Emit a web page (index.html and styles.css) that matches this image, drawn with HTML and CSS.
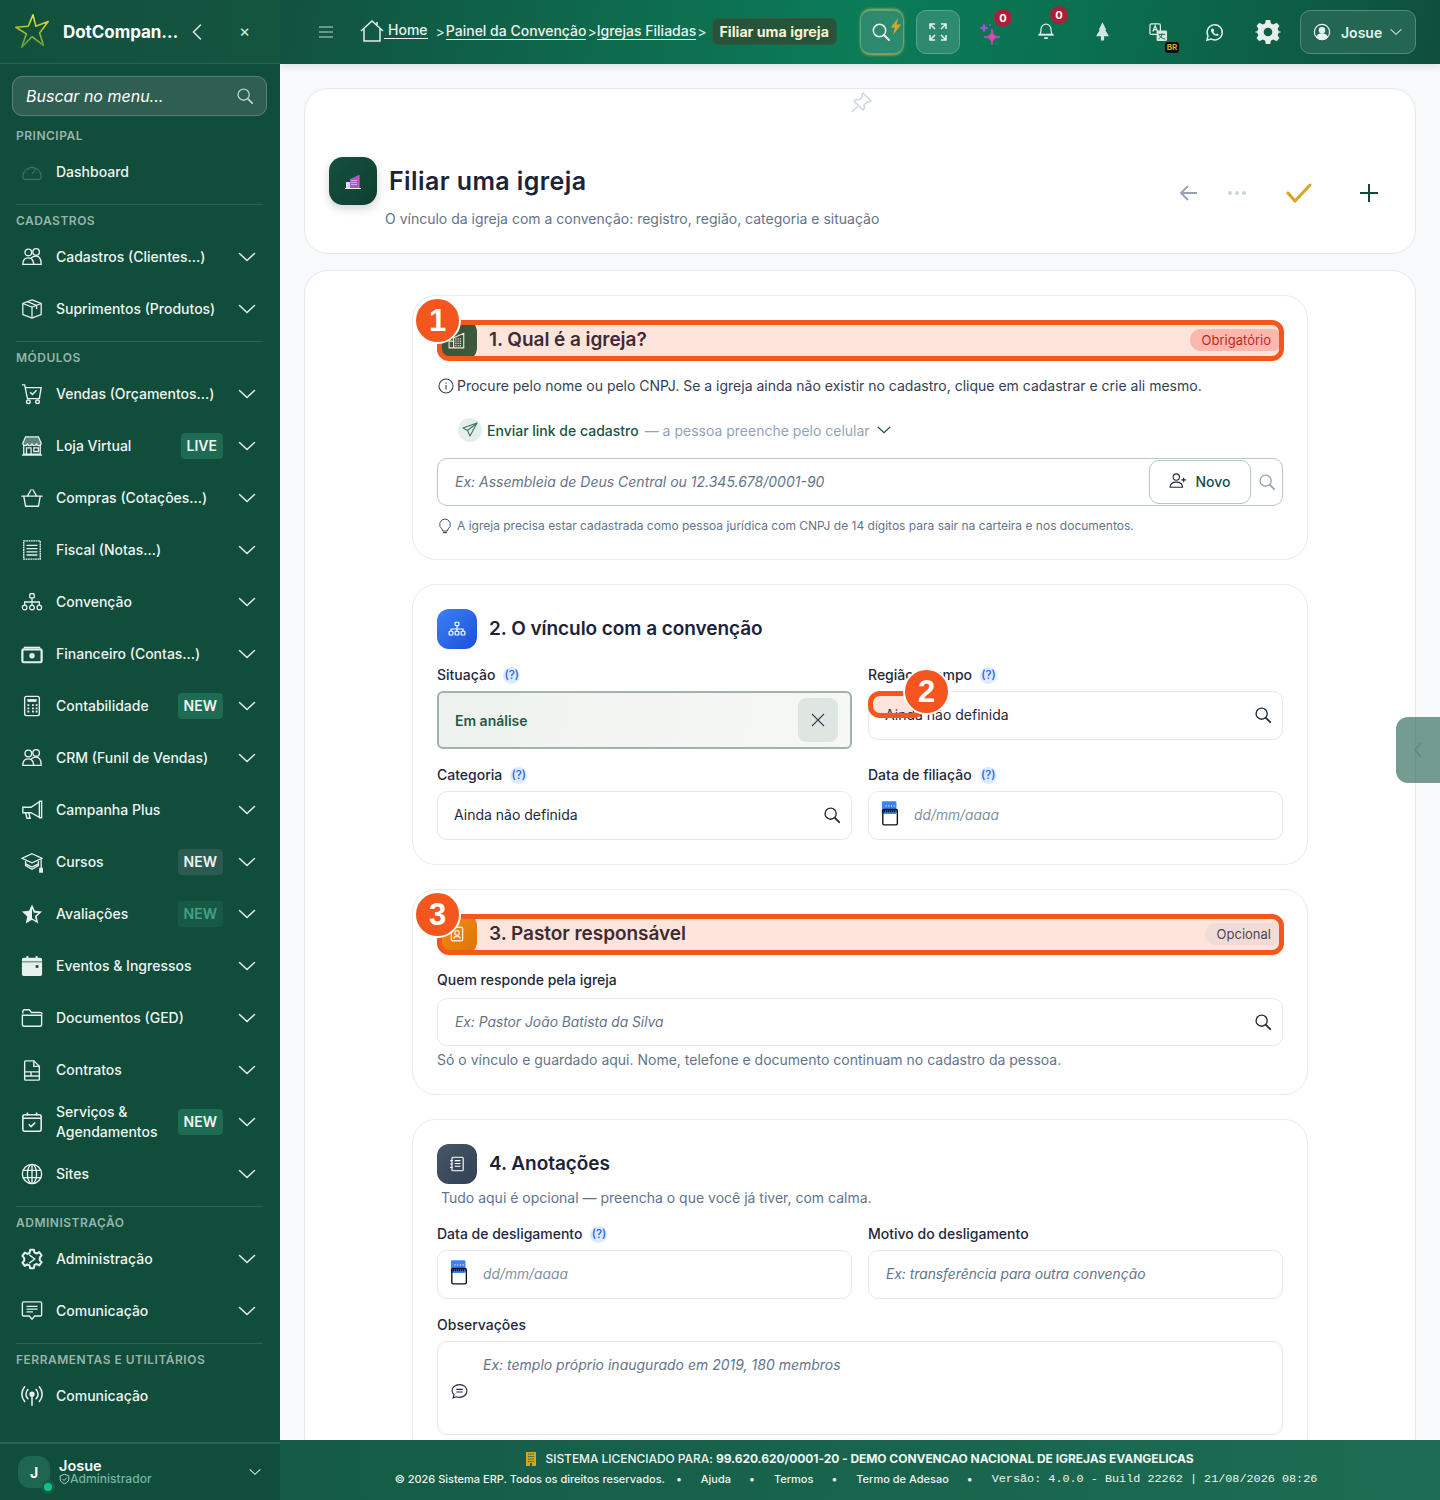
FILE: index.html
```html
<!DOCTYPE html>
<html lang="pt-BR">
<head>
<meta charset="utf-8">
<title>Filiar uma igreja</title>
<link rel="stylesheet" href="styles.css">
</head>
<body>
<svg class="defs" width="0" height="0" aria-hidden="true">
  <symbol id="chev" viewBox="0 0 18 18"><path d="M1.5 5.5 9 12.5l7.5-7" fill="none" stroke="currentColor" stroke-width="1.6" stroke-linecap="round"/></symbol>
  <symbol id="search" viewBox="0 0 20 20"><circle cx="8.5" cy="8.5" r="6.2" fill="none" stroke="currentColor" stroke-width="1.5"/><path d="m13.2 13.2 4.8 4.8" stroke="currentColor" stroke-width="2" stroke-linecap="round"/></symbol>
  <symbol id="people" viewBox="0 0 24 24"><g fill="none" stroke="currentColor" stroke-width="1.5"><circle cx="8" cy="7" r="3.6"/><circle cx="16.5" cy="6.5" r="3.6"/><path d="M2 20c0-4 2-7 6-7 2 0 4 1 5 3l1 4z"/><path d="M11 13c1.5-1.5 3.5-2 5.500-2 3.500 0 5.500 3.500 5.500 9h-8"/></g></symbol>
  <symbol id="cal" viewBox="0 0 22 30"><rect x="1" y="1" width="16" height="14" rx="1.5" fill="#3b82f6"/><path d="M5 6h1m2 0h1m2 0h1m2 0H15" stroke="#fff" stroke-width="1.5"/><path d="M1 12h16" stroke="#111" stroke-width="2" stroke-dasharray="1.5 .7"/><rect x="2" y="10" width="16" height="17" rx="1.5" fill="none" stroke="#111" stroke-width="1.5"/></symbol>
</svg>

<div class="app">
  <aside class="sidebar">
    <div class="brand">
      <svg class="logo" viewBox="0 0 40 40"><defs><linearGradient id="lg" x1="0" y1="0" x2="0" y2="1"><stop offset="0" stop-color="#e8e22a"/><stop offset="1" stop-color="#5e9b3a"/></linearGradient></defs><path d="M20 2 23 14 36 9 27 21 31 34 19 25 8 36 13 22 2 15 15 14Z" fill="#11503d" stroke="url(#lg)" stroke-width="1.7" stroke-linejoin="round"/></svg>
      <span class="brand-name">DotCompan…</span>
      <svg class="brand-back" viewBox="0 0 12 18"><path d="M9.5 2 2.5 9l7 7" fill="none" stroke="currentColor" stroke-width="1.5" stroke-linecap="round"/></svg>
      <span class="brand-close">×</span>
    </div>
    <div class="side-search"><span>Buscar no menu...</span><svg class="ic18"><use href="#search"/></svg></div>

    <nav class="side-nav">
      <div class="group">
        <div class="group-label">PRINCIPAL</div>
        <a class="item"><svg class="ic dim" viewBox="0 0 24 24" fill="none" stroke="currentColor" stroke-width="1.3"><path d="M2 17a10 10 0 0 1 20 0c0 2-1 3-2 3H4c-1 0-2-1-2-3Z"/><path d="m12 14 4-5M6 13h1m10 0h1M8 9l.7.7M12 7v1"/></svg><span class="lbl">Dashboard</span></a>
      </div>
      <div class="group">
        <div class="group-label">CADASTROS</div>
        <a class="item"><svg class="ic"><use href="#people"/></svg><span class="lbl">Cadastros (Clientes...)</span><svg class="chev"><use href="#chev"/></svg></a>
        <a class="item"><svg class="ic" viewBox="0 0 24 24" fill="none" stroke="currentColor" stroke-width="1.4"><path d="M12 2 22 6v12l-10 4-10-4V6Z"/><path d="m2 6 10 4 10-4M12 10v12M7 4l10 4v4"/></svg><span class="lbl">Suprimentos (Produtos)</span><svg class="chev"><use href="#chev"/></svg></a>
      </div>
      <div class="group">
        <div class="group-label">MÓDULOS</div>
        <a class="item"><svg class="ic" viewBox="0 0 24 24" fill="none" stroke="currentColor" stroke-width="1.5"><path d="M1 2h3l3 15h13l2-12H5"/><path d="m10 10 2.5 2.5L17 8"/><circle cx="8" cy="20.5" r="2"/><circle cx="18" cy="20.5" r="2"/></svg><span class="lbl">Vendas (Orçamentos...)</span><svg class="chev"><use href="#chev"/></svg></a>
        <a class="item"><svg class="ic" viewBox="0 0 24 24" fill="none" stroke="currentColor" stroke-width="1.4"><path d="M5 2h14l3 7a2.500 2.500 0 0 1-5 0 2.500 2.500 0 0 1-5 0 2.500 2.500 0 0 1-5 0 2.500 2.500 0 0 1-5 0Z" fill="currentColor" fill-opacity=".35"/><path d="M3 11v10h18V11M1 22h22M6 21v-7h5v7M14 14h5v4h-5z"/></svg><span class="lbl">Loja Virtual</span><span class="tag live">LIVE</span><svg class="chev"><use href="#chev"/></svg></a>
        <a class="item"><svg class="ic" viewBox="0 0 24 24" fill="none" stroke="currentColor" stroke-width="1.5"><path d="M1 10h22M3 10l2 11h14l2-11M7 10l4-7M17 10l-4-7" stroke-linecap="round"/></svg><span class="lbl">Compras (Cotações...)</span><svg class="chev"><use href="#chev"/></svg></a>
        <a class="item"><svg class="ic" viewBox="0 0 24 24" fill="none" stroke="currentColor" stroke-width="1.5"><rect x="3" y="2" width="18" height="20" stroke-dasharray="2 .6"/><path d="M6 7h12M6 10.5h12M6 14h12M6 17.5h12"/></svg><span class="lbl">Fiscal (Notas...)</span><svg class="chev"><use href="#chev"/></svg></a>
        <a class="item"><svg class="ic" viewBox="0 0 24 24" fill="none" stroke="currentColor" stroke-width="1.4"><rect x="9.5" y="3" width="5" height="4.5" rx="1"/><circle cx="4" cy="18" r="2.5"/><circle cx="12" cy="18" r="2.5"/><circle cx="20" cy="18" r="2.5"/><path d="M12 7.5v8M4 15.500V12h16v3.500"/></svg><span class="lbl">Convenção</span><svg class="chev"><use href="#chev"/></svg></a>
        <a class="item"><svg class="ic" viewBox="0 0 24 24"><path d="M3 4h18v1.5H3z" fill="currentColor"/><rect x="1.5" y="7" width="21" height="14" rx="1.5" fill="none" stroke="currentColor" stroke-width="2.4"/><circle cx="12" cy="14" r="3" fill="currentColor"/></svg><span class="lbl">Financeiro (Contas...)</span><svg class="chev"><use href="#chev"/></svg></a>
        <a class="item"><svg class="ic" viewBox="0 0 24 24" fill="none" stroke="currentColor" stroke-width="1.5"><rect x="4" y="1.5" width="16" height="21" rx="2"/><path d="M7 6h10" stroke-width="3"/><path d="M7 11h2m3 0h2m2 0h2M7 14.500h2m3 0h2m2 0h2M7 18h2m3 0h2m2 0h2" stroke-width="2"/></svg><span class="lbl">Contabilidade</span><span class="tag">NEW</span><svg class="chev"><use href="#chev"/></svg></a>
        <a class="item"><svg class="ic"><use href="#people"/></svg><span class="lbl">CRM (Funil de Vendas)</span><svg class="chev"><use href="#chev"/></svg></a>
        <a class="item"><svg class="ic" viewBox="0 0 24 24" fill="none" stroke="currentColor" stroke-width="1.5"><path d="M2 9h9l9-6v17l-9-5H2Z"/><path d="M5 15l1.500 6H10l-1.500-6M20 2.500h2.500v18H20"/></svg><span class="lbl">Campanha Plus</span><svg class="chev"><use href="#chev"/></svg></a>
        <a class="item"><svg class="ic" viewBox="0 0 24 24" fill="none" stroke="currentColor" stroke-width="1.4"><path d="m12 3 11 5-11 5L1 8Z"/><path d="M5 11v5l7 4 7-4v-5M5 14l7 3.500 7-3.500"/><path d="M22 9v10"/><rect x="20.5" y="19" width="3" height="4" fill="currentColor"/></svg><span class="lbl">Cursos</span><span class="tag slate">NEW</span><svg class="chev"><use href="#chev"/></svg></a>
        <a class="item"><svg class="ic" viewBox="0 0 24 24"><path d="m12 1.500 3.200 7 7.800.9-5.800 5.200 1.600 7.700L12 18.400l-6.800 3.900 1.600-7.700L1 9.400l7.800-.9Z" fill="currentColor"/><path d="m12 6 2 4.500 4.800.5-3.600 3.200 1 4.800L12 16.500Z" fill="#124e3c"/></svg><span class="lbl">Avaliações</span><span class="tag faint">NEW</span><svg class="chev"><use href="#chev"/></svg></a>
        <a class="item"><svg class="ic" viewBox="0 0 24 24"><path d="M3 3h3V1h2v2h8V1h2v2h3a2 2 0 0 1 2 2v2H1V5a2 2 0 0 1 2-2Z" fill="currentColor"/><path d="M1 8h22v13a2 2 0 0 1-2 2H3a2 2 0 0 1-2-2Z" fill="currentColor"/><rect x="16" y="11" width="3" height="3" fill="#124e3c"/></svg><span class="lbl">Eventos &amp; Ingressos</span><svg class="chev"><use href="#chev"/></svg></a>
        <a class="item"><svg class="ic" viewBox="0 0 24 24" fill="none" stroke="currentColor" stroke-width="1.5"><path d="M2 7V5a2 2 0 0 1 2-2h5l2.500 3H21a2 2 0 0 1 2 2"/><path d="M1.500 9h21v10a2 2 0 0 1-2 2h-17a2 2 0 0 1-2-2Z"/></svg><span class="lbl">Documentos (GED)</span><svg class="chev"><use href="#chev"/></svg></a>
        <a class="item"><svg class="ic" viewBox="0 0 24 24" fill="none" stroke="currentColor" stroke-width="1.5"><path d="M5 2h9l6 6v14a1 1 0 0 1-1 1H5a1 1 0 0 1-1-1V3a1 1 0 0 1 1-1Z"/><path d="M14 2v6h6M4 14h16M4 18.500h16M11 14v4.500"/></svg><span class="lbl">Contratos</span><svg class="chev"><use href="#chev"/></svg></a>
        <a class="item"><svg class="ic" viewBox="0 0 24 24" fill="none" stroke="currentColor" stroke-width="1.7"><rect x="2" y="4" width="20" height="18" rx="2"/><path d="M2 8h20M7 1.500V5M17 1.500V5M8.500 14.500l2.500 2.500 4.500-4.500"/></svg><span class="lbl two">Serviços &amp; Agendamentos</span><span class="tag">NEW</span><svg class="chev"><use href="#chev"/></svg></a>
        <a class="item"><svg class="ic" viewBox="0 0 24 24" fill="none" stroke="currentColor" stroke-width="1.5"><circle cx="12" cy="12" r="10.500"/><ellipse cx="12" cy="12" rx="5" ry="10.500"/><path d="M12 1.500v21M2 8h20M2 16h20"/></svg><span class="lbl">Sites</span><svg class="chev"><use href="#chev"/></svg></a>
      </div>
      <div class="group">
        <div class="group-label">ADMINISTRAÇÃO</div>
        <a class="item"><svg class="ic" viewBox="0 0 24 24" fill="none" stroke="currentColor" stroke-width="2.2"><path d="M10 2h4l.7 3 2.500 1 2.700-1.500 2.600 3.500-2 2.500v3l2 2-2.600 3.500-2.700-1.500-2.500 1L14 22h-4l-.7-3-2.500-1-2.700 1.500L1.500 16l2-2v-3l-2-2.500L4.100 5l2.700 1.500 2.500-1Z" stroke-linejoin="round"/><path d="M9 7.500 15 12l-6 4.500" stroke-width="1.5"/></svg><span class="lbl">Administração</span><svg class="chev"><use href="#chev"/></svg></a>
        <a class="item"><svg class="ic" viewBox="0 0 24 24" fill="none" stroke="currentColor" stroke-width="1.5"><path d="M3 2h18a1.500 1.500 0 0 1 1.500 1.500V16a1.500 1.500 0 0 1-1.500 1.500h-6L12 21l-3-3.500H3A1.500 1.500 0 0 1 1.500 16V3.500A1.500 1.500 0 0 1 3 2Z"/><path d="M6 7h12M6 10h12M6 13h7"/></svg><span class="lbl">Comunicação</span><svg class="chev"><use href="#chev"/></svg></a>
      </div>
      <div class="group">
        <div class="group-label">FERRAMENTAS E UTILITÁRIOS</div>
        <a class="item"><svg class="ic" viewBox="0 0 24 24" fill="none" stroke="currentColor" stroke-width="1.7" stroke-linecap="round"><circle cx="12" cy="10" r="2" fill="currentColor"/><path d="M12 12v10M7.500 15a7 7 0 0 1 0-10M16.500 5a7 7 0 0 1 0 10M4 18a12 12 0 0 1 0-16M20 2a12 12 0 0 1 0 16"/></svg><span class="lbl">Comunicação</span></a>
      </div>
    </nav>

    <div class="side-user">
      <span class="avatar">J<i class="online"></i></span>
      <div class="user-text">
        <div class="user-name">Josue</div>
        <div class="user-role"><svg viewBox="0 0 14 14" fill="none" stroke="currentColor" stroke-width="1.1"><path d="M7 1 12.500 3v4c0 3-2.500 5-5.500 6-3-1-5.500-3-5.500-6V3Z"/><path d="m4.500 7 2 2 3-3.500"/></svg><span>Administrador</span></div>
      </div>
      <svg class="user-chev"><use href="#chev"/></svg>
    </div>
  </aside>

  <div class="main">
    <header class="topbar">
      <svg class="burger" viewBox="0 0 14 12"><path d="M0 1h14M0 6h14M0 11h14" stroke="currentColor" stroke-width="1.2"/></svg>
      <nav class="crumbs">
        <svg class="home" viewBox="0 0 24 22" fill="none" stroke="currentColor" stroke-width="1.5"><path d="M1 11 12 1l11 10M4 9v12h16V9M17 2v3"/></svg>
        <a class="crumb up">Home</a><span class="sep first">&gt;</span>
        <a class="crumb">Painel da Convenção</a><span class="sep">&gt;</span>
        <a class="crumb">Igrejas Filiadas</a><span class="sep">&gt;</span>
        <span class="crumb-now">Filiar uma igreja</span>
      </nav>
      <div class="tools">
        <button class="tbtn glow"><svg class="ic22" viewBox="0 0 20 20"><use href="#search"/></svg><svg class="bolt" viewBox="0 0 10 16"><path d="M7 0 0 9h4l-2 7 8-10H5.500Z" fill="#d4a72c"/></svg></button>
        <button class="tbtn last"><svg class="ic18x" viewBox="0 0 20 20" fill="none" stroke="currentColor" stroke-width="1.5"><path d="M7 2H2v5M2 2l5 5M13 2h5v5M18 2l-5 5M2 13v5h5M2 18l5-5M18 13v5h-5M18 18l-5-5"/></svg></button>
        <span class="tool t-spark"><svg viewBox="0 0 24 24" width="24" height="24"><path d="M14 7Q14 15 22 15 14 15 14 23 14 15 6 15 14 15 14 7Z" fill="#d946b6" stroke="#d946b6" stroke-width=".8"/><path d="M6 2Q6 6 10 6 6 6 6 10 6 6 2 6 6 6 6 2Z" fill="#a855d8" stroke="#a855d8" stroke-width=".8"/><path d="M12 2v2" stroke="#a855d8" stroke-width="1.2"/></svg><b class="count c1">0</b></span>
        <span class="tool t-bell"><svg viewBox="0 0 20 22" width="18" height="20" fill="none" stroke="currentColor" stroke-width="1.4"><path d="M3 16c1.500-1.500 1.500-3 1.500-6a5.500 5.500 0 0 1 11 0c0 3 0 4.500 1.500 6Z"/><path d="M1.500 16.500h17"/><path d="M8 20h4" stroke-width="2"/></svg><b class="count c2">0</b></span>
        <span class="tool t-tree"><svg viewBox="0 0 14 18" width="15" height="20"><path d="M7 0 10.500 7H9.500L13 13H8.500v4h-3v-4H1L4.500 7H3.500Z" fill="#d5e6df"/></svg></span>
        <span class="tool t-tr"><svg viewBox="0 0 20 20" width="19" height="19" fill="none" stroke="currentColor" stroke-width="1.3"><rect x="1" y="1" width="11" height="11" rx="1.5"/><rect x="8" y="8" width="11" height="11" rx="1.5" fill="#d5e6df" stroke="none"/><path d="m4 9 2.500-6L9 9M4.800 7h3.400"/><path d="M10 12h7M13.500 11v1.500c0 2-2 3.500-3.500 4M11 13c1 2 3.500 3.500 6 4" stroke="#0a6a4c" stroke-width="1"/></svg><b class="br">BR</b></span>
        <span class="tool t-wa"><svg viewBox="0 0 20 20" width="19" height="19" fill="none" stroke="currentColor" stroke-width="1.5"><path d="M2 18 3.200 13.700A8 8 0 1 1 6.300 16.800Z"/><path d="M7 6c-1 1-1 2.500.5 4.500S11 13.800 13 13.500c1-.2 1.500-1 1.300-1.700L12.500 11l-1 1c-1-.4-2.200-1.600-2.700-2.700l1-1L9 6.300C8.400 5.800 7.500 5.500 7 6Z" fill="currentColor" stroke="none"/></svg></span>
        <span class="tool t-gear"><svg viewBox="0 0 24 24" width="26" height="26"><path fill-rule="evenodd" d="M10 1h4l.7 3.100 2.400 1 2.700-1.700 2.800 2.800-1.700 2.700 1 2.400L25 12v0l-3.100.7-1 2.400 1.700 2.700-2.800 2.800-2.700-1.700-2.400 1L14 23h-4l-.7-3.100-2.400-1-2.700 1.700-2.800-2.800 1.700-2.700-1-2.400L-1 12v0l3.100-.7 1-2.400L1.400 6.200 4.200 3.400l2.700 1.700 2.400-1ZM12 8a4 4 0 1 0 0 8 4 4 0 0 0 0-8Z" fill="#e6efeb"/></svg></span>
        <button class="userbtn"><svg viewBox="0 0 20 20" width="18" height="18" fill="none" stroke="currentColor" stroke-width="1.3"><circle cx="10" cy="10" r="8.500"/><circle cx="10" cy="8" r="3" fill="currentColor"/><path d="M4 16c1-3 3-4 6-4s5 1 6 4a8.500 8.500 0 0 1-12 0Z" fill="currentColor"/></svg><span>Josue</span><svg class="uchev"><use href="#chev"/></svg></button>
      </div>
    </header>

    <main class="content">
      <section class="card page-head">
        <svg class="pin" viewBox="0 0 24 24" fill="none" stroke="#cbd5e1" stroke-width="1.4"><path d="M14 2 22 10c-1 1-2.500 1-3.500.5L15 14c.8 2 .3 4-1 5l-9-9c1-1.300 3-1.800 5-1l3.500-3.500C13 4.500 13 3 14 2ZM8.500 15.500 3 21"/></svg>
        <div class="heading">
          <div class="heading-row">
            <span class="page-icon"><svg viewBox="0 0 16 16" width="16" height="16"><path d="M1 9h4v6H1z" fill="#e0d8ff"/><path d="M5 6l9-4v13H5z" fill="#a855d8"/><path d="M6.500 7h1v1h-1zm2 0h1v1h-1zm2 0h1v1h-1zm-4 2h1v1h-1zm2 0h1v1h-1zm2 0h1v1h-1zm-4 2h1v1h-1zm2 0h1v1h-1zm2 0h1v1h-1z" fill="#fff"/><path d="M14 2v13" stroke="#ef6a6a"/><path d="M0 15.500h16" stroke="#fff"/></svg></span>
            <h1>Filiar uma igreja</h1>
          </div>
          <p>O vínculo da igreja com a convenção: registro, região, categoria e situação</p>
        </div>
        <div class="actions">
          <svg viewBox="0 0 20 20" width="20" height="20" fill="none" stroke="#94a3b8" stroke-width="1.8"><path d="M18 10H2M9 3l-7 7 7 7"/></svg>
          <span class="dots"><i></i><i></i><i></i></span>
          <svg class="act-check" viewBox="0 0 26 20" width="26" height="20" fill="none" stroke="#d9a521" stroke-width="3" stroke-linecap="round" stroke-linejoin="round"><path d="M2 10l7 8L24 2"/></svg>
          <svg class="act-plus" viewBox="0 0 18 18" width="18" height="18" stroke="#14493a" stroke-width="2"><path d="M9 0v18M0 9h18"/></svg>
        </div>
      </section>

      <section class="card form-card">
        <div class="form-col">
          <section class="panel">
            <div class="panel-head">
              <span class="p-icon green"><svg viewBox="0 0 16 16" width="18" height="18"><path d="M1 9h4v6H1zM5 6l9-4v13H5z" fill="none" stroke="#fff"/><path d="M6.500 7h6M6.500 9h6M6.500 11h6M6.500 13h6" stroke="#fff" stroke-dasharray="1 1"/></svg></span>
              <h2>1. Qual é a igreja?</h2>
              <span class="pill req">Obrigatório</span>
              <span class="ring"></span>
              <span class="marker">1</span>
            </div>
            <p class="lead"><svg viewBox="0 0 16 16" width="16" height="16" fill="none" stroke="#334155" stroke-width="1.1"><circle cx="8" cy="8" r="7"/><path d="M8 7v4.500M8 4.500v1.200"/></svg>Procure pelo nome ou pelo CNPJ. Se a igreja ainda não existir no cadastro, clique em cadastrar e crie ali mesmo.</p>
            <div class="send">
              <span class="send-ic"><svg viewBox="0 0 16 16" width="16" height="16" fill="none" stroke="#3f7562" stroke-width="1.1" stroke-linejoin="round"><path d="M15 1 1 6l4.500 2.500L8 14Z"/><path d="M15 1 5.500 8.500"/></svg></span>
              <strong>Enviar link de cadastro</strong><span class="send-dim">— a pessoa preenche pelo celular</span>
              <svg class="send-chev"><use href="#chev"/></svg>
            </div>
            <div class="field search-field">
              <span class="ph">Ex: Assembleia de Deus Central ou 12.345.678/0001-90</span>
              <button class="novo"><svg viewBox="0 0 16 16" width="18" height="18" fill="none" stroke="#1e293b" stroke-width="1"><circle cx="6.500" cy="4.500" r="2.800"/><path d="M1 13.500c0-3 2.500-4.500 5.500-4.500s5.500 1.500 5.500 4.500ZM13 5v4M11 7h4"/></svg>Novo</button>
              <svg class="ic18 faint-s"><use href="#search"/></svg>
            </div>
            <p class="hint"><svg viewBox="0 0 14 16" width="14" height="16" fill="none" stroke="#475569" stroke-width="1"><path d="M7 1a5.500 5.500 0 0 0-3 10l.7 2h4.600l.7-2A5.500 5.500 0 0 0 7 1Z"/><path d="M5 14.500h4" stroke-width="1.5"/></svg>A igreja precisa estar cadastrada como pessoa jurídica com CNPJ de 14 dígitos para sair na carteira e nos documentos.</p>
          </section>

          <section class="panel">
            <div class="panel-head">
              <span class="p-icon blue"><svg viewBox="0 0 24 24" width="18" height="18" fill="none" stroke="#fff" stroke-width="1.6"><rect x="9.500" y="3" width="5" height="4.500" rx="1"/><rect x="1.500" y="15" width="5" height="5" rx="1"/><rect x="9.500" y="15" width="5" height="5" rx="1"/><rect x="17.500" y="15" width="5" height="5" rx="1"/><path d="M12 7.500V15M4 15v-3h16v3"/></svg></span>
              <h2>2. O vínculo com a convenção</h2>
            </div>
            <div class="grid2 mt16">
              <div class="cell">
                <label class="f-label">Situação <i class="help">(?)</i></label>
                <div class="field selected"><span>Em análise</span><span class="clear"><svg viewBox="0 0 14 14" width="14" height="14" stroke="#334155" stroke-width="1.1"><path d="M1 1l12 12M13 1 1 13"/></svg></span></div>
              </div>
              <div class="cell">
                <label class="f-label">Região / campo <i class="help">(?)</i></label>
                <div class="field spot-host"><span class="val">Ainda não definida</span><svg class="ic18 dark"><use href="#search"/></svg><span class="ring small"></span><span class="marker m2">2</span></div>
              </div>
              <div class="cell">
                <label class="f-label">Categoria <i class="help">(?)</i></label>
                <div class="field"><span class="val">Ainda não definida</span><svg class="ic18 dark"><use href="#search"/></svg></div>
              </div>
              <div class="cell">
                <label class="f-label">Data de filiação <i class="help">(?)</i></label>
                <div class="field"><svg class="cal"><use href="#cal"/></svg><span class="ph date">dd/mm/aaaa</span></div>
              </div>
            </div>
          </section>

          <section class="panel">
            <div class="panel-head">
              <span class="p-icon orange"><svg viewBox="0 0 16 16" width="18" height="18" fill="none" stroke="#fff" stroke-width="1.2"><rect x="3" y="2" width="10" height="12" rx="1"/><circle cx="8" cy="7" r="2"/><path d="M5 12c.5-1.500 1.500-2 3-2s2.500.5 3 2"/></svg></span>
              <h2>3. Pastor responsável</h2>
              <span class="pill opt">Opcional</span>
              <span class="ring"></span>
              <span class="marker">3</span>
            </div>
            <label class="f-label mt10 lab8">Quem responde pela igreja</label>
            <div class="field h48"><span class="ph tight">Ex: Pastor João Batista da Silva</span><svg class="ic18 dark"><use href="#search"/></svg></div>
            <p class="note">Só o vínculo e guardado aqui. Nome, telefone e documento continuam no cadastro da pessoa.</p>
          </section>

          <section class="panel">
            <div class="panel-head">
              <span class="p-icon slate"><svg viewBox="0 0 16 16" width="18" height="18" fill="none" stroke="#fff" stroke-width="1"><rect x="3.500" y="2" width="10" height="12" rx="1"/><path d="M6 5h5M6 7.500h5M6 10h5M2 5h2M2 8h2M2 11h2"/></svg></span>
              <h2>4. Anotações</h2>
            </div>
            <p class="sub">Tudo aqui é opcional — preencha o que você já tiver, com calma.</p>
            <div class="grid2 mt16">
              <div class="cell">
                <label class="f-label">Data de desligamento <i class="help">(?)</i></label>
                <div class="field"><svg class="cal"><use href="#cal"/></svg><span class="ph date">dd/mm/aaaa</span></div>
              </div>
              <div class="cell">
                <label class="f-label">Motivo do desligamento</label>
                <div class="field"><span class="ph tight">Ex: transferência para outra convenção</span></div>
              </div>
              <div class="cell wide">
                <label class="f-label">Observações</label>
                <div class="field area"><svg viewBox="0 0 16 16" width="17" height="17" fill="none" stroke="#1e293b" stroke-width="1.1"><path d="M8 1.500c4 0 7 2.500 7 6s-3 6-7 6c-1 0-2-.2-3-.5L2 14l.8-3A6 6 0 0 1 1 7.500c0-3.500 3-6 7-6Z"/><path d="M5 6h6M5 8.500h6"/></svg><span class="ph">Ex: templo próprio inaugurado em 2019, 180 membros</span></div>
              </div>
            </div>
          </section>
        </div>
      </section>
      <button class="side-tab"><svg viewBox="0 0 10 18" width="10" height="18" fill="none" stroke="#5f8679" stroke-width="1.3"><path d="M8 2 2 9l6 7"/></svg></button>
    </main>

    <footer class="foot">
      <div class="foot-1"><svg viewBox="0 0 10 14" width="10" height="14"><path d="M0 0h10v14H0z" fill="#d9a521"/><path d="M2 2h6M2 4.500h6M2 7h6M2 9.500h6" stroke="#17634b" stroke-dasharray="1.500 .7"/><path d="M4 11h2v3H4z" fill="#17634b"/></svg><span>SISTEMA LICENCIADO PARA: <b>99.620.620/0001-20 - DEMO CONVENCAO NACIONAL DE IGREJAS EVANGELICAS</b></span></div>
      <div class="foot-2"><span>© 2026 Sistema ERP. Todos os direitos reservados.</span><i>•</i><a>Ajuda</a><i>•</i><a>Termos</a><i>•</i><a>Termo de Adesao</a><i>•</i><code>Versão: 4.0.0 - Build 22262 | 21/08/2026 08:26</code></div>
    </footer>
  </div>
</div>
</body>
</html>
```
FILE: styles.css
```css
* { box-sizing: border-box; }
html, body { margin: 0; height: 1500px; overflow: hidden; }
body { font-family: Inter, "Liberation Sans", sans-serif; font-size: 14px; color: #1e293b; background: #f8f9fb; }
.defs { position: absolute; }
svg { flex: none; display: block; }
h1, h2, p { margin: 0; }
button { font: inherit; cursor: pointer; }

.app { display: grid; grid-template-columns: 280px 1fr; height: 1500px; }

/* Sidebar */
.sidebar { background: #114d3b; color: #eef4f1; display: flex; flex-direction: column; height: 1500px; overflow: hidden; }
.brand { height: 64px; flex: none; display: flex; align-items: center; padding: 0 0 0 14px; background: linear-gradient(90deg, #11503d, #145540); border-bottom: 1px solid #2a6352; }
.logo { width: 38px; height: 38px; }
.brand-name { width: 111px; margin-left: 11px; font-size: 17px; font-weight: 700; color: #fff; white-space: nowrap; letter-spacing: -.05px; }
.brand-back { width: 12px; height: 18px; margin-left: 17px; color: #dce8e3; }
.brand-close { margin-left: 36px; font-size: 17px; color: #dce8e3; line-height: 1; }
.side-search { flex: none; margin: 12px 13px 4px 12px; height: 40px; display: flex; align-items: center; justify-content: space-between; padding: 0 12px 0 13px; background: #2e5f50; border: 1px solid #5c8577; border-radius: 10px; color: #fff; font-style: italic; font-size: 16px; }
.side-search svg { color: #bed0c9; }
.ic18 { width: 18px; height: 18px; }
.group { border-bottom: 1px solid #2a6352; margin: 0 17px 0 16px; padding-bottom: 6px; }
.group:last-child { border-bottom: 0; }
.group-label { height: 26px; padding-top: 8px; line-height: 16px; font-size: 12px; font-weight: 600; color: #97b5aa; letter-spacing: .5px; white-space: nowrap; }
.item { height: 52px; display: flex; align-items: center; margin-left: 5px; font-weight: 500; font-size: 14px; color: #eef4f1; }
.ic { width: 22px; height: 22px; color: #e8f0ed; }
.ic.dim { color: #2f7560; }
.lbl { margin-left: 13px; flex: 1; line-height: 20px; white-space: nowrap; }
.lbl.two { white-space: normal; max-width: 122px; flex: 1; }
.tag { height: 26px; line-height: 26px; padding: 0 6px; background: #1d6b52; border-radius: 4px; font-size: 14px; font-weight: 600; margin-right: 15px; margin-left: 6px; }
.tag.slate { background: #2d5a50; }
.tag.faint { background: #165a46; color: #44a084; }
.chev { width: 18px; height: 18px; margin-right: 7px; color: #e0ebe6; }
.side-user { margin-top: auto; height: 58px; flex: none; display: flex; align-items: center; padding: 0 19px 0 18px; border-top: 2px solid #2a6352; }
.avatar { position: relative; width: 32px; height: 32px; border-radius: 12px; background: #1f6650; display: grid; place-items: center; font-weight: 700; color: #fff; }
.online { position: absolute; right: -2px; bottom: -3px; width: 8px; height: 8px; background: #10c27e; border-radius: 50%; box-shadow: 0 0 0 3px #1a5c48; }
.user-text { margin-left: 9px; flex: 1; }
.user-name { font-size: 14.5px; font-weight: 600; line-height: 13px; color: #fff; }
.user-role { display: flex; align-items: center; font-size: 12.1px; font-weight: 500; color: #6fb79f; line-height: 13px; }
.user-role svg { width: 11px; height: 12px; color: #cfe2da; }
.user-chev { width: 12px; height: 12px; color: #d5e4de; }

/* Main */
.main { display: grid; grid-template-rows: 64px 1fr 60px; height: 1500px; overflow: hidden; min-width: 0; }
.topbar { display: flex; align-items: center; padding: 0 24px 0 39px; background: linear-gradient(100deg, #115240 0%, #0b7c57 50%, #0a6f4f 70%, #0f4f3c 100%); color: #e6efeb; box-shadow: 0 2px 8px rgba(15, 23, 42, .12); position: relative; z-index: 2; }
.burger { width: 14px; height: 12px; color: #c6d8d1; }
.crumbs { display: flex; align-items: center; margin-left: 27px; color: #eaf2ee; font-weight: 500; font-size: 14px; margin-top: -2px; }
.home { width: 24px; height: 22px; color: #e4ede9; }
.crumb { border-bottom: 1.5px solid #eaf2ee; line-height: 17px; white-space: nowrap; }
.crumb.up { margin-top: -2px; padding-left: 4px; }
.sep { margin: 0 0 0 1px; font-weight: 400; color: #d7e5df; }
.sep.first { margin: 0 1px 0 8px; }
.crumb-now { margin-left: 5px; height: 27px; line-height: 25px; padding: 0 7px; background: #27533a; border: 1px solid #305c3c; border-radius: 6px; color: #f7f3d3; font-weight: 700; font-size: 14.2px; white-space: nowrap; }
.tools { margin-left: auto; display: flex; align-items: center; height: 44px; }
.tbtn { position: relative; width: 44px; height: 44px; margin-right: 12px; padding: 0; display: grid; place-items: center; background: #2e8a6c; border: 1px solid #5ea38c; border-radius: 10px; color: #e8f1ed; }
.tbtn.last { margin-right: -1px; }
.tbtn.glow { box-shadow: 0 -2px 3px -1px #c7b34a, 0 2px 3px -1px #c7b34a; }
.ic22 { width: 20px; height: 20px; margin-right: 2px; }
.ic18x { width: 20px; height: 20px; }
.bolt { position: absolute; top: 7px; right: 1px; width: 12px; height: 17px; }
.tool { position: relative; width: 56px; height: 44px; display: grid; place-items: center; }
.t-spark { margin-left: 3px; }
.t-spark svg { margin-top: 3px; }
.t-bell svg { margin-top: -4px; }
.t-spark .count, .t-bell .count { margin-top: 0; }
.count { position: absolute; right: 6px; width: 18px; height: 18px; border-radius: 50%; background: #ab1f3c; color: #fff; font-size: 11px; line-height: 18px; text-align: center; font-weight: 700; font-style: normal; }
.c1 { top: -1px; }
.c2 { top: -4px; }
.br { position: absolute; left: 35px; bottom: 1px; width: 14px; height: 11px; background: #0c0c0c; border-radius: 3px; color: #d9a521; font-size: 8px; line-height: 11px; text-align: center; }
.t-gear { margin-left: -2px; }
.userbtn { margin-left: 4px; width: 116px; height: 44px; display: flex; align-items: center; padding: 0 12px; background: #236752; border: 1px solid #4d8d78; border-radius: 10px; color: #e8f1ed; font-weight: 600; font-size: 14px; }
.userbtn span { margin-left: 10px; }
.uchev { width: 12px; height: 12px; margin-left: 8px; color: #cfe0d9; }

/* Content */
.content { position: relative; padding: 24px; display: flex; flex-direction: column; gap: 16px; overflow: hidden; background: #f8f9fb; }
.card { background: #fff; border: 1px solid #e5e8ee; border-radius: 24px; flex: none; }
.page-head { position: relative; display: flex; align-items: center; justify-content: space-between; padding: 68px 24px 25px; }
.pin { position: absolute; left: 544px; top: 2px; width: 24px; height: 24px; }
.heading-row { display: flex; align-items: center; gap: 12px; }
.page-icon { width: 48px; height: 48px; border-radius: 14px; background: linear-gradient(135deg, #14503e, #0f3f31); display: grid; place-items: center; box-shadow: 0 4px 10px rgba(15, 23, 42, .18); }
h1 { font-size: 25px; font-weight: 600; color: #1b2338; letter-spacing: .4px; line-height: 48px; }
.heading p { margin: 2px 0 -3px 56px; line-height: 24px; color: #64748b; font-size: 14px; }
.actions { display: flex; align-items: center; padding-right: 13px; }
.dots { display: flex; gap: 3px; margin: 0 40px 0 29px; }
.dots i { width: 4px; height: 4px; border-radius: 50%; background: #cbd5e1; }
.act-plus { margin-left: 48px; }

.form-card { padding: 24px; }
.form-col { width: 896px; margin: 0 auto; display: flex; flex-direction: column; gap: 24px; }
.panel { flex: none; border: 1px solid #e8ebef; border-radius: 24px; padding: 24px; }
.panel-head { position: relative; height: 40px; display: flex; align-items: center; }
.p-icon { width: 40px; height: 40px; border-radius: 12px; display: grid; place-items: center; }
.green { background: linear-gradient(135deg, #14503e, #1d5c45); }
.blue { background: linear-gradient(135deg, #3b82f6, #1d4ed8); }
.orange { background: linear-gradient(135deg, #f59e0b, #d97706); }
.slate { background: linear-gradient(135deg, #475569, #334155); }
h2 { margin-left: 12px; padding-bottom: 2px; font-size: 19px; font-weight: 600; color: #1b2338; letter-spacing: -.05px; }
.pill { margin-left: auto; height: 22px; line-height: 22px; padding: 0 12px; border-radius: 11px; font-size: 13px; }
.req { background: #fecaca; color: #b91c1c; }
.opt { background: #f1f5f9; color: #334155; }
.ring { position: absolute; inset: 0 -1px -1px 0; border: 5px solid #f4561d; border-radius: 12px; background: rgba(244, 86, 29, .16); }
.marker { position: absolute; left: -23px; top: -23px; width: 47px; height: 47px; border-radius: 50%; background: #f4561d; border: 2px solid #fff; color: #fff; font-size: 31px; font-weight: 700; line-height: 43px; text-align: center; font-family: "Liberation Sans", sans-serif; }
.lead { margin-top: 16px; display: flex; align-items: center; gap: 3px; line-height: 20px; font-size: 14px; color: #334155; white-space: nowrap; }
.lead svg { margin-left: 1px; }
.send { display: flex; align-items: center; height: 24px; margin: 22px 0 16px 21px; font-size: 14px; }
.send-ic { width: 24px; height: 24px; background: #e6eeea; border-radius: 50%; display: grid; place-items: center; }
.send strong { margin-left: 5px; font-weight: 500; color: #1b5345; }
.send-dim { margin-left: 6px; color: #94a3b8; }
.send-chev { width: 14px; height: 14px; margin-left: 7px; color: #1b5345; }
.field { position: relative; height: 49px; display: flex; align-items: center; padding: 0 10px 2px 16px; background: #fff; border: 1px solid #e5e8ee; border-radius: 10px; }
.field.h48 { height: 48px; padding-bottom: 0; }
.field .ic18 { margin-left: auto; }
.dark { color: #1e293b; }
.ph { color: #64748b; font-style: italic; font-size: 14px; white-space: nowrap; }
.ph.tight { font-size: 13.8px; margin-left: 1px; }
.val { color: #1e293b; }
.search-field { height: 48px; border-color: #b7c8c2; padding: 0 6px 0 17px; }
.search-field .ph { padding-bottom: 2px; }
.novo { margin-left: auto; width: 102px; height: 44px; display: flex; align-items: center; justify-content: center; gap: 8px; padding: 0 0 2px; background: #fff; border: 1px solid #b7c8c2; border-radius: 10px; color: #124f3f; font-weight: 500; font-size: 14px; }
.field .faint-s { margin-left: 7px; color: #94a3b8; }
.hint { margin-top: 11px; display: flex; align-items: center; gap: 5px; font-size: 12px; line-height: 18px; color: #64748b; white-space: nowrap; }
.hint svg { margin-left: 1px; }
.grid2 { display: grid; grid-template-columns: 1fr 1fr; gap: 16px; align-items: start; }
.mt16 { margin-top: 16px; }
.wide { grid-column: 1 / 3; }
.f-label { display: flex; align-items: center; height: 20px; margin-bottom: 6px; padding-bottom: 2px; font-size: 14px; font-weight: 500; color: #1e293b; gap: 8px; }
.mt10 { margin-top: 16px; }
.lab8 { margin-bottom: 8px; }
.help { width: 17px; height: 17px; margin-bottom: -2px; border-radius: 50%; background: #dbeafe; color: #2563eb; font-size: 11.5px; line-height: 17px; text-align: center; font-style: normal; }
.selected { height: 58px; border: 2px solid #9db5aa; background: linear-gradient(100deg, #eef2ef, #f6f8f6); font-weight: 600; color: #1f5c46; padding: 0 12px 0 16px; border-radius: 6px; justify-content: space-between; }
.clear { width: 40px; height: 44px; background: #dfe6e2; border-radius: 8px; display: grid; place-items: center; }
.ring.small { inset: -1px auto auto -1px; width: 57px; height: 27px; }
.m2 { left: 34px; top: -24px; }
.cal { width: 20px; height: 30px; margin-left: -4px; margin-top: -2px; }
.date { margin-left: 13px; color: #8290a3; font-size: 13.8px; }
.note { margin-top: 4px; line-height: 20px; font-size: 14px; color: #64748b; }
.sub { margin: 4px 0 0 4px; line-height: 20px; font-size: 14px; color: #64748b; }
.area { height: 94px; display: block; padding: 14px 0 0 45px; }
.area svg { position: absolute; left: 13px; top: 41px; }
.side-tab { position: absolute; right: 0; top: 653px; width: 44px; height: 66px; padding: 0; display: grid; place-items: center; background: rgba(17, 85, 65, .58); border: 0; border-radius: 12px 0 0 12px; z-index: 3; }

/* Footer */
.foot { background: linear-gradient(90deg, #155b45, #1c6d53); color: #eef4f1; display: flex; flex-direction: column; align-items: center; padding-top: 10px; font-size: 12px; z-index: 2; position: relative; }
.foot-1 { display: flex; align-items: center; gap: 9px; line-height: 18px; font-weight: 500; letter-spacing: -.05px; white-space: nowrap; }
.foot-1 b { font-weight: 700; }
.foot-2 { display: flex; align-items: center; margin: 2px 8px 0 0; font-size: 11px; font-weight: 500; line-height: 18px; white-space: nowrap; }
.foot-2 i { font-style: normal; margin: 0 19px 0 11px; }
.foot-2 a { margin-right: 7px; }
.foot-2 code { font-family: "Liberation Mono", monospace; font-size: 11.8px; font-weight: 500; }
```
